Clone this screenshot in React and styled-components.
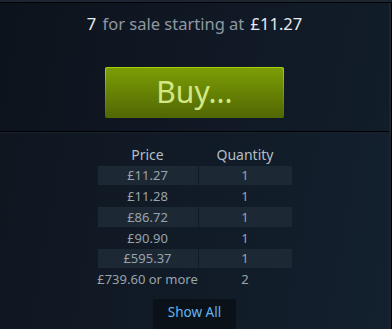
import React from "react";
import styled, { createGlobalStyle } from "styled-components";

const Global = createGlobalStyle`
  html, body { margin: 0; padding: 0; background: #0f1620; }
  body { font-family: "Noto Sans", "Open Sans", Arial, sans-serif; }
`;

const Frame = styled.div`
  width: 392px;
  height: 329px;
  overflow: hidden;
  display: flex;
  flex-direction: column;
  background: #1b2431;
`;

const TopEdge = styled.div`
  height: 2px;
  flex: none;
  background: #1c2532;
  border-bottom: 1px solid #000;
`;

const Panel = styled.div`
  flex: 1;
  display: flex;
  flex-direction: column;
  padding-right: 2px;
  border-right: 1px solid #000;
  min-height: 0;
`;

const BuySection = styled.section`
  display: flex;
  flex-direction: column;
  align-items: center;
  padding-top: 11px;
  height: 129px;
  box-sizing: border-box;
  background: linear-gradient(100deg, #0d131c 0%, #101824 50%, #121d2a 100%);
`;

const Heading = styled.div`
  font-size: 16.5px;
  line-height: 20px;
  color: #8f98a0;
  white-space: nowrap;
`;

const Strong = styled.span`
  color: #e6ecf1;
  margin: 0 ${(p) => p.$gap || 0}px;
`;

const BuyButton = styled.button`
  margin-top: 33px;
  width: 179px;
  height: 51px;
  padding: 1px 1px 0 1px;
  border: none;
  border-radius: 2px;
  background: linear-gradient(to bottom, #a4d007 5%, #536904 95%);
  cursor: pointer;
  display: flex;
`;

const BuyInner = styled.span`
  flex: 1;
  display: flex;
  align-items: center;
  justify-content: center;
  border-radius: 2px 2px 0 0;
  background: linear-gradient(to bottom, #7a9b05 5%, #536904 95%);
  color: #d2e885;
  font-family: "Noto Sans", "Open Sans", Arial, sans-serif;
  font-size: 30px;
  line-height: 40px;
  padding-bottom: 2px;
`;

const OrdersSection = styled.section`
  flex: 1;
  display: flex;
  flex-direction: column;
  align-items: center;
  border-top: 1px solid #000;
  box-shadow: inset 0 1px 0 #17222f;
  padding-top: 13px;
  background: linear-gradient(100deg, #0f1620 0%, #111b27 50%, #13202e 100%);
`;

const Table = styled.div`
  display: grid;
  grid-template-columns: 100px 93px;
  grid-auto-rows: 19.75px;
  column-gap: 1px;
  row-gap: 1px;
`;

const HeadCell = styled.div`
  display: flex;
  align-items: center;
  justify-content: center;
  font-size: 14px;
  color: #b5bcc3;
  height: 20px;
`;

const Cell = styled.div`
  display: flex;
  align-items: center;
  justify-content: center;
  font-size: 13px;
  color: #9aa3ab;
  white-space: nowrap;
  background: ${(p) => (p.$stripe ? "#1d2835" : "transparent")};
`;

const ShowAll = styled.button`
  margin-top: 10px;
  width: 83px;
  height: 30px;
  padding: 0 0 4px 0;
  border: none;
  border-radius: 2px;
  background: #0a1119;
  color: #62b4ef;
  font-family: "Noto Sans", "Open Sans", Arial, sans-serif;
  font-size: 13.5px;
  cursor: pointer;
  flex: none;
`;

const rows = [
  ["£11.27", "1"],
  ["£11.28", "1"],
  ["£86.72", "1"],
  ["£90.90", "1"],
  ["£595.37", "1"],
  ["£739.60 or more", "2"],
];

export default function App() {
  return (
    <Frame>
      <Global />
      <TopEdge />
      <Panel>
        <BuySection>
          <Heading>
            <Strong $gap={2}>7</Strong>
            <span> for sale starting at </span>
            <Strong $gap={2}>£11.27</Strong>
          </Heading>
          <BuyButton>
            <BuyInner>Buy...</BuyInner>
          </BuyButton>
        </BuySection>
        <OrdersSection>
          <Table>
            <HeadCell>Price</HeadCell>
            <HeadCell>Quantity</HeadCell>
            {rows.map(([price, qty], i) => (
              <React.Fragment key={i}>
                <Cell $stripe={i % 2 === 0 && i < 5}>{price}</Cell>
                <Cell $stripe={i % 2 === 0 && i < 5}>{qty}</Cell>
              </React.Fragment>
            ))}
          </Table>
          <ShowAll>Show All</ShowAll>
        </OrdersSection>
      </Panel>
    </Frame>
  );
}
